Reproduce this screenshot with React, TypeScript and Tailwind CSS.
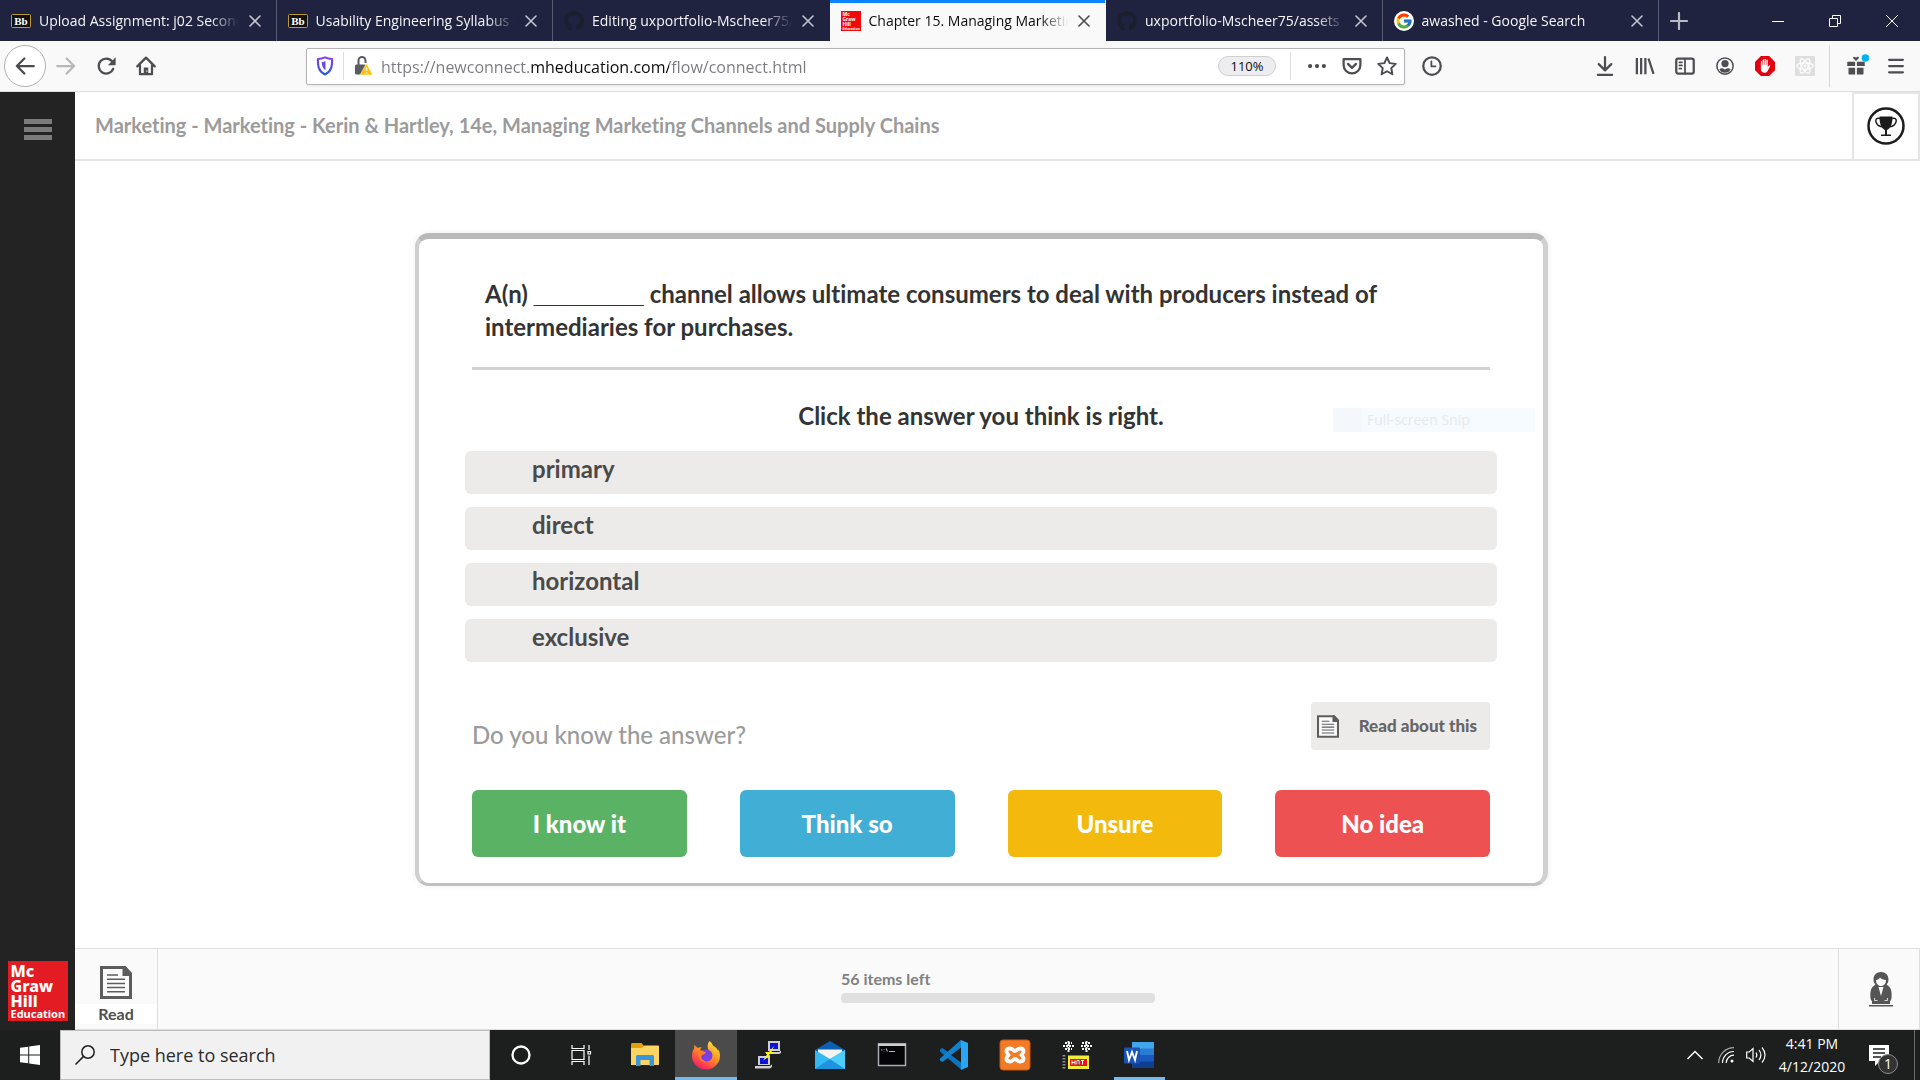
import type { ReactNode } from "react";
import { FaGithub } from "react-icons/fa";
import { FcGoogle } from "react-icons/fc";

function BlackboardIcon() {
  return (
    <svg viewBox="0 0 20 14" className="h-[14px] w-5 shrink-0">
      <rect x="0.5" y="0.5" width="19" height="13" rx="1" fill="#111" stroke="#b99a2e" />
      <text x="10" y="10.5" textAnchor="middle" fontFamily="Liberation Serif, serif" fontWeight="700" fontSize="11" fill="#fff">Bb</text>
    </svg>
  );
}

function McGrawFavicon() {
  return (
    <svg viewBox="0 0 20 20" className="size-5 shrink-0">
      <rect width="20" height="20" fill="#f20a0a" />
      <g fill="#fff" fontFamily="Noto Sans, sans-serif" fontWeight="700" fontSize="5">
        <text x="1.5" y="5">Mc</text>
        <text x="1.5" y="10">Graw</text>
        <text x="1.5" y="15">Hill</text>
        <text x="1.5" y="19" fontSize="3.5">Education</text>
      </g>
    </svg>
  );
}

function GoogleFavicon() {
  return (
    <span className="flex size-5 shrink-0 items-center justify-center rounded-full bg-white">
      <FcGoogle className="size-[18px]" />
    </span>
  );
}

function GithubFavicon() {
  return <FaGithub className="size-5 shrink-0 text-[#1b1e2c]" />;
}

type Tab = { title: string; icon: ReactNode; active?: boolean; divider?: boolean };

const tabs: Tab[] = [
  { title: "Upload Assignment: j02 Secondary", icon: <BlackboardIcon />, divider: true },
  { title: "Usability Engineering Syllabus - S", icon: <BlackboardIcon />, divider: true },
  { title: "Editing uxportfolio-Mscheer75/", icon: <GithubFavicon /> },
  { title: "Chapter 15. Managing Marketing", icon: <McGrawFavicon />, active: true },
  { title: "uxportfolio-Mscheer75/assets at", icon: <GithubFavicon />, divider: true },
  { title: "awashed - Google Search", icon: <GoogleFavicon />, divider: true },
];

function TabItem({ title, icon, active, divider }: Tab) {
  return (
    <div
      role="tab"
      aria-selected={!!active}
      className={`flex min-w-0 flex-1 items-center border-r pr-[9px] pl-[11px] ${
        active
          ? "bg-[#f9f9fa] text-[#0c0c0d] shadow-[inset_0_3px_0_#0a84ff]"
          : "text-[#f4f4f8]"
      } ${divider ? "border-r-[#5a5c73]" : "border-r-transparent"}`}
    >
      {icon}
      <span className="ml-2 flex-1 overflow-hidden pt-px text-sm whitespace-nowrap [mask-image:linear-gradient(to_right,black_85%,transparent_99%)]">
        {title}
      </span>
      <button aria-label={`Close ${title}`} className="ml-[2px] flex size-6 shrink-0 items-center justify-center">
        <svg viewBox="0 0 12 12" className={`size-3 ${active ? "text-[#4a4a4f]" : "text-[#c3c4cf]"}`}>
          <path d="M1 1l10 10M11 1L1 11" stroke="currentColor" strokeWidth="1.6" strokeLinecap="round" />
        </svg>
      </button>
    </div>
  );
}

function TabBar() {
  return (
    <div className="flex h-[41px] bg-[#202340]">
      <div role="tablist" className="flex w-[1659px] min-w-0">
        {tabs.map((t) => (
          <TabItem key={t.title} {...t} />
        ))}
      </div>
      <button aria-label="New tab" className="flex w-10 items-center justify-center text-[#b9bac6]">
        <svg viewBox="0 0 18 18" className="size-[18px]">
          <path d="M9 1v16M1 9h16" stroke="currentColor" strokeWidth="2.2" strokeLinecap="round" />
        </svg>
      </button>
      <div className="ml-auto flex text-white">
        <button aria-label="Minimize" className="flex w-[57px] items-center justify-center">
          <svg viewBox="0 0 12 12" className="size-3"><path d="M0 6.5h12" stroke="currentColor" /></svg>
        </button>
        <button aria-label="Restore" className="flex w-[57px] items-center justify-center">
          <svg viewBox="0 0 12 12" className="size-3" fill="none" stroke="currentColor">
            <path d="M0.500 3.500h8v8h-8zM3.500 3.500v-3h8v8h-3" />
          </svg>
        </button>
        <button aria-label="Close window" className="flex w-[57px] items-center justify-center">
          <svg viewBox="0 0 14 14" className="size-[14px]"><path d="M1 1l12 12M13 1L1 13" stroke="currentColor" /></svg>
        </button>
      </div>
    </div>
  );
}

function ToolButton({ label, width = "w-10", children }: { label: string; width?: string; children: ReactNode }) {
  return (
    <button aria-label={label} className={`${width} flex h-9 shrink-0 items-center justify-center text-[#4d4d52]`}>
      <svg viewBox="0 0 16 16" className="size-5 overflow-visible" fill="none" stroke="currentColor" strokeWidth="1.8" strokeLinecap="round" strokeLinejoin="round">
        {children}
      </svg>
    </button>
  );
}

function Toolbar() {
  return (
    <div className="flex h-[51px] items-center border-b border-[#dcdcdc] bg-[#f9f9fa] px-1">
      <button aria-label="Back" className="flex size-[42px] shrink-0 items-center justify-center rounded-full border border-[#b1b1b5] bg-white text-[#4a4a4f]">
        <svg viewBox="0 0 16 16" className="size-5" fill="none" stroke="currentColor" strokeWidth="1.8" strokeLinecap="round" strokeLinejoin="round">
          <path d="M15 8H1.500M7.500 2L1.500 8l6 6" />
        </svg>
      </button>
      <ToolButton label="Forward">
        <path stroke="#b8b8bb" d="M1 8h13.500M8.500 2l6 6-6 6" />
      </ToolButton>
      <ToolButton label="Reload">
        <path d="M13.800 10.200A6 6 0 1 1 12.900 4.300" />
        <path fill="currentColor" stroke="none" d="M15.700 1v5.700a.6.600 0 0 1-.6.600H9.500z" />
      </ToolButton>
      <ToolButton label="Home">
        <path d="M1 8.300L8 1.300l7 7M3.200 7.500v7h9.600v-7" />
        <path fill="currentColor" stroke="none" d="M6.200 9.200h3.600v5.300H6.200z" />
        <path stroke="none" fill="#fff" d="M8.200 11.500h.9v1h-.9z" />
      </ToolButton>

      <div className="ml-[140px] flex h-[37px] min-w-0 flex-1 items-center rounded-xs border border-[#b4b4b6] bg-white shadow-[0_1px_3px_rgba(0,0,0,0.08)]">
        <button aria-label="Tracking protection" className="flex w-9 shrink-0 justify-center">
          <svg viewBox="0 0 16 16" className="size-5">
            <defs>
              <linearGradient id="shield" x1="0" y1="0" x2="0" y2="1">
                <stop offset="0" stopColor="#8a3ff0" />
                <stop offset="1" stopColor="#2a5bd8" />
              </linearGradient>
            </defs>
            <path d="M8 1.100c-2 .9-3.900 1.200-5.700 1.300C2.300 8 2.600 12.200 8 14.800c5.400-2.600 5.700-6.800 5.700-12.400C11.900 2.300 10 2 8 1.100z" fill="none" stroke="url(#shield)" strokeWidth="1.700" strokeLinejoin="round" />
            <path d="M8.400 4.200v7.200C6 9.800 5.500 7.700 5.400 4.800c1-.1 2-.3 3-.6z" fill="#6b4be8" />
          </svg>
        </button>
        <span className="h-7 w-px bg-[#dededf]" />
        <button aria-label="Connection not secure" className="flex w-[37px] shrink-0 justify-center">
          <svg viewBox="0 0 18 18" className="size-[18px] overflow-visible">
            <path d="M4.500 8V3.500a3.500 3.500 0 0 1 7 0V6" fill="none" stroke="#5b5b60" strokeWidth="2" />
            <rect x="1" y="7.500" width="11" height="10" rx="1.500" fill="#5b5b60" />
            <path d="M12.500 6.300L18.800 18H6.200z" fill="#ffbf00" stroke="#fff" strokeWidth=".6" strokeLinejoin="round" />
            <path d="M12.500 10.500v3.300M12.500 15.300v1.200" stroke="#fff" strokeWidth="1.500" />
          </svg>
        </button>
        <input
          aria-label="Address"
          defaultValue="https://newconnect.mheducation.com/flow/connect.html"
          className="h-8 min-w-0 flex-1 bg-[linear-gradient(90deg,#7b7b7f_0_150px,#0c0c0d_150px_288px,#7b7b7f_288px)] bg-clip-text pt-[2px] text-base text-transparent outline-none"
        />
        <button className="h-5 w-[58px] shrink-0 rounded-full border border-[#cfcfd1] bg-[#ededf0] text-[13px] leading-[18px] text-[#0c0c0d]">110%</button>
        <span className="mr-2 ml-[14px] h-7 w-px bg-[#dededf]" />
        <ToolButton label="Page actions" width="w-[35px]">
          <path fill="currentColor" stroke="none" d="M2.500 6.300a1.700 1.700 0 1 0 0 3.400 1.700 1.700 0 0 0 0-3.400zM8 6.300a1.700 1.700 0 1 0 0 3.400 1.700 1.700 0 0 0 0-3.400zM13.500 6.300a1.700 1.700 0 1 0 0 3.400 1.700 1.700 0 0 0 0-3.400z" />
        </ToolButton>
        <ToolButton label="Save to Pocket" width="w-[35px]">
          <path d="M1.300 2.500h13.400v4.700a6.700 6.700 0 0 1-13.400 0zM4.800 6.300L8 9.500l3.200-3.200" />
        </ToolButton>
        <ToolButton label="Bookmark" width="w-[35px]">
          <path strokeWidth="1.600" d="M8 1.200l2.100 4.500 4.900.6-3.600 3.400.9 4.900L8 12.200l-4.300 2.400.9-4.900L1 6.300l4.900-.6z" />
        </ToolButton>
      </div>

      <div className="mr-[133px] ml-[7px] flex">
        <ToolButton label="History">
          <circle cx="8" cy="8" r="7" />
          <path strokeWidth="1.400" d="M7.500 4.300v4h3.300" />
        </ToolButton>
      </div>
      <ToolButton label="Downloads">
        <path d="M8 .8v10M3 6.500l5 5 5-5M2.300 15h11.400" />
      </ToolButton>
      <ToolButton label="Library">
        <path strokeLinecap="butt" d="M1.500 1.500v13M4.900 1.500v13M8.300 1.500v13M10.800 2l4 12.300" />
      </ToolButton>
      <ToolButton label="Sidebars">
        <rect x="1" y="2" width="14" height="12" rx="1.500" />
        <path strokeWidth="1.400" d="M8 2v12M3.500 5h2M3.500 7.500h2M3.500 10h1.500" />
      </ToolButton>
      <ToolButton label="Account">
        <circle cx="8" cy="8" r="6.500" strokeWidth="1.200" />
        <circle cx="8" cy="6" r="2.900" fill="currentColor" stroke="none" />
        <path fill="currentColor" stroke="none" d="M3.500 10.500c1.500-1 2.200-1.200 4.500.2 2.300-1.400 3-1.200 4.500-.2a5 5 0 0 1-9 0z" />
      </ToolButton>
      <ToolButton label="AdBlock">
        <path fill="#e3000f" stroke="none" d="M4.700 0h6.600L16 4.700v6.600L11.300 16H4.700L0 11.300V4.700z" />
        <path fill="#fff" stroke="none" d="M4.700 7V4.500c0-.7 1-.7 1 0V7h.4V3.200c0-.8 1.100-.8 1.100 0V7h.4V2.700c0-.8 1.100-.8 1.100 0V7h.4V3.300c0-.8 1.100-.8 1.100 0v5.400l.9-1c.6-.6 1.300-.1.900.6l-1.900 3.600c-.5.900-1.200 1.400-2.300 1.400-2 0-3.100-1.200-3.100-3z" />
      </ToolButton>
      <ToolButton label="React Developer Tools">
        <rect x="0" y="0" width="16" height="16" rx="1" fill="#dedede" stroke="none" />
        <g stroke="#fff" strokeWidth="1">
          <ellipse cx="8" cy="8" rx="6.500" ry="2.600" />
          <ellipse cx="8" cy="8" rx="6.500" ry="2.600" transform="rotate(60 8 8)" />
          <ellipse cx="8" cy="8" rx="6.500" ry="2.600" transform="rotate(120 8 8)" />
        </g>
        <circle cx="8" cy="8" r="1.200" fill="#fff" stroke="none" />
      </ToolButton>
      <span className="mr-[6px] ml-1 h-[42px] w-px bg-[#d7d7db]" />
      <ToolButton label="What's new" width="w-10">
        <path fill="currentColor" stroke="none" d="M1.500 4.500h5.800V8H1V5c0-.3.200-.5.500-.5zM8.700 4.500h5.800c.3 0 .5.200.5.500v3H8.700zM2 9.300h5.300v5.400H2.500a.5.500 0 0 1-.5-.5zM8.700 9.300H14v4.900c0 .3-.2.500-.5.500H8.700zM8 4L5.800 1.800C5.200.8 6.800 0 8 1.300 9.200 0 10.800.8 10.200 1.800z" />
        <circle cx="15.500" cy="1.500" r="3" fill="#00b3f4" stroke="none" />
      </ToolButton>
      <ToolButton label="Menu" width="w-10">
        <path d="M2.500 3h11M2.500 8h11M2.500 13h11" />
      </ToolButton>
    </div>
  );
}

function DocumentIcon({ className }: { className: string }) {
  return (
    <svg viewBox="0 0 32 33" className={className} fill="none" stroke="#5d5d5d">
      <path strokeWidth="3" fill="#fbfbfb" d="M1.500 1.500h23l6 6v24h-29z" />
      <path fill="#5d5d5d" stroke="none" d="M22.500 0h3L32 7.500V10h-9.500z" />
      <path strokeWidth="1.500" d="M7 9h11M7 13.200h18M7 17.400h18M7 21.600h18M7 25.800h18" />
    </svg>
  );
}

function Sidebar() {
  return (
    <nav className="flex w-[75px] shrink-0 flex-col items-center justify-between bg-[#232323] pt-[27px] pb-[9px]">
      <button aria-label="Open menu" className="flex w-7 flex-col gap-[3px]">
        <span className="h-[5px] bg-[#7b7b7b]" />
        <span className="h-[5px] bg-[#7b7b7b]" />
        <span className="h-[5px] bg-[#7b7b7b]" />
      </button>
      <div className="size-[60px] bg-[#e31b23] pt-[3px] pl-[3px] font-['Noto_Sans',sans-serif] text-base leading-[15px] font-extrabold text-white">
        <div>Mc</div>
        <div>Graw</div>
        <div>Hill</div>
        <div className="text-[11px] leading-[10px] font-bold">Education</div>
      </div>
    </nav>
  );
}

const answers = ["primary", "direct", "horizontal", "exclusive"];

const confidence = [
  { label: "I know it", color: "bg-[#5ab365]" },
  { label: "Think so", color: "bg-[#41aed5]" },
  { label: "Unsure", color: "bg-[#f3b90c]" },
  { label: "No idea", color: "bg-[#ee5152]" },
];

function QuestionCard() {
  return (
    <section className="rounded-[14px] border-t-6 border-r-5 border-b-3 border-l-4 border-t-[#b9b9b9] border-r-[#d0d0d0] border-b-[#c0c0c0] border-l-[#cfcfcf] bg-white px-[46px] pt-[38px] pb-[26px] text-2xl font-bold text-[#333] shadow-[0_0_6px_rgba(0,0,0,0.08)]">
      <p className="px-5 leading-[33px]">
        A(n) <span className="font-['Liberation_Sans',sans-serif] text-[22px] leading-none">_________</span> channel allows ultimate consumers to deal with producers instead of intermediaries for purchases.
      </p>
      <hr className="mx-[7px] mt-6 border-t-3 border-[#d2d2d2]" />
      <div className="relative mt-[29px]">
        <h2 className="text-center leading-[33px]">Click the answer you think is right.</h2>
        <div className="absolute top-[9px] right-[-38px] flex h-6 w-[202px] items-center bg-[#f5fbfe] pl-[34px] font-['Open_Sans',sans-serif] text-sm font-normal text-[#e6e9ea] shadow-[inset_29px_0_0_#f4f8fd]">
          Full-screen Snip
        </div>
      </div>
      <div className="mt-[19px] flex flex-col gap-[13px]">
        {answers.map((a) => (
          <button key={a} className="flex h-[43px] items-start rounded-md bg-[#ecebe9] px-[67px] leading-9 text-[#4a4a4a]">
            {a}
          </button>
        ))}
      </div>
      <div className="mt-10 flex items-end justify-between px-[7px]">
        <p className="leading-[30px] font-medium text-[#9b9b9b]">Do you know the answer?</p>
        <button className="flex h-12 w-[179px] items-center justify-between rounded-sm bg-[#ecebe9] pr-[13px] pl-[6px] text-[17px] font-black text-[#666]">
          <DocumentIcon className="h-[23px] w-[22px]" />
          Read about this
        </button>
      </div>
      <div className="mt-10 grid grid-cols-4 gap-[53px] px-[7px]">
        {confidence.map((c) => (
          <button key={c.label} className={`${c.color} h-[67px] rounded-md font-black text-white`}>
            {c.label}
          </button>
        ))}
      </div>
    </section>
  );
}

function CoursePage() {
  return (
    <div className="flex flex-1 bg-white font-[Lato,sans-serif] [font-variant-ligatures:none]">
      <Sidebar />
      <div className="flex min-w-0 flex-1 flex-col">
        <header className="flex h-[69px] items-stretch border-b-2 border-[#e3e3e3]">
          <h1 className="flex flex-1 items-center pb-[2px] pl-5 text-xl font-bold text-[#9b9b9b]">
            Marketing - Marketing - Kerin &amp; Hartley, 14e, Managing Marketing Channels and Supply Chains
          </h1>
          <button aria-label="Achievements" className="flex w-[68px] items-center justify-center border-x-2 border-t-2 border-[#e6e6e6] pb-[2px]">
            <svg viewBox="0 0 38 38" className="size-[38px]" fill="none" stroke="#1c1c1c">
              <circle cx="19" cy="19" r="17.500" strokeWidth="2.500" />
              <path fill="#1c1c1c" stroke="none" d="M12.500 9.500h13c0 7-1.500 11.500-5.500 13.500v4.500h4V29H14v-1.500h4V23c-4-2-5.500-6.500-5.500-13.500z" />
              <path strokeWidth="1.500" d="M13 11.500c-3-1-5 .5-4 3.500s3.500 4.500 6 4.700M25 11.500c3-1 5 .5 4 3.500s-3.500 4.500-6 4.700" />
            </svg>
          </button>
        </header>
        <main className="flex-1 pt-[72px] pr-[372px] pb-[59px] pl-[340px]">
          <QuestionCard />
        </main>
        <footer className="flex h-[82px] items-stretch border-y border-[#dfdfdf] bg-[#fafafa]">
          <button className="flex w-[83px] flex-col items-center border-r border-[#dfdfdf] pt-[17px] text-base font-bold text-[#4f4f4f]">
            <DocumentIcon className="h-[33px] w-8" />
            <span className="mt-[5px] w-full bg-white leading-5">Read</span>
          </button>
          <div className="flex flex-1 justify-center pt-[19px]">
            <div className="w-[314px]">
              <label htmlFor="items-left" className="block text-base leading-[22px] font-bold text-[#808080]">56 items left</label>
              <div id="items-left" role="progressbar" aria-valuenow={0} className="mt-[3px] h-[10px] rounded-[4px] bg-[#e0e0e0]" />
            </div>
          </div>
          <button aria-label="Profile" className="flex w-[82px] items-center justify-center border-x border-[#dfdfdf] pl-[3px]">
            <svg viewBox="0 0 24 35" className="h-[35px] w-6">
              <path fill="#555" d="M12 0C7.500 0 4.500 3 4.500 7.500c0 2 .6 3.500 1.800 5L3.500 15C1.500 17 1 22 1.500 26c.3 2 1 3 1.500 3v3h18v-3c.6 0 1.200-1 1.500-3 .5-4 0-9-2-11l-2.800-2.500c1.200-1.500 1.800-3 1.800-5C19.500 3 16.500 0 12 0z" />
              <path fill="#fafafa" d="M7 8c2 0 3-1 4-2.500 1 1.300 3.500 2.500 6 2.500 0 3.500-2 6-5 6s-5-2.500-5-6zM9.500 15h5L12 24z" />
              <path stroke="#fafafa" strokeWidth=".8" fill="none" d="M5.500 26v2.500h3M18.500 26v2.500h-3" />
              <path fill="#555" d="M0 33h24v1.500H0z" />
            </svg>
          </button>
        </footer>
      </div>
    </div>
  );
}

type App = { name: string; icon: ReactNode; state?: "active" | "open" };

const apps: App[] = [
  {
    name: "Cortana",
    icon: <circle cx="15" cy="15" r="8.500" fill="none" stroke="#fff" strokeWidth="2.300" />,
  },
  {
    name: "Task View",
    icon: (
      <path d="M4 5v3.500h12V5M4 10.500h12v9H4zM4 25v-3.500h12V25M21 5v5M21 15.500V25M20 11.500h2.500v2.500H20z" fill="none" stroke="#fff" strokeWidth="1.200" />
    ),
  },
  {
    name: "File Explorer",
    icon: (
      <>
        <path d="M1 4.500C1 3.600 1.600 3 2.500 3h9l3 3.500V10H1z" fill="#e0a10d" />
        <path d="M1 8h11l2.500-2.500H28c.6 0 1 .4 1 1V24c0 .6-.4 1-1 1H1z" fill="#fcd462" />
        <path d="M6 26V16.500c0-.9.600-1.500 1.500-1.500h15c.9 0 1.500.600 1.500 1.500V26h-4.500v-6h-9v6z" fill="#3b95da" />
      </>
    ),
  },
  {
    name: "Firefox",
    state: "active",
    icon: (
      <>
        <defs>
          <linearGradient id="fox" x1="0.800" y1="0" x2="0.200" y2="1">
            <stop offset="0" stopColor="#ffe93b" />
            <stop offset="0.450" stopColor="#ff9122" />
            <stop offset="0.800" stopColor="#ff3a4f" />
            <stop offset="1" stopColor="#e8167c" />
          </linearGradient>
        </defs>
        <path d="M18.500 1c2 1.500 3 3.200 3.500 4.800 2.500 1 4.500 3.500 5 5.200l.5-1.500c1 2 1.500 4.500 1.500 6.500A14 13.500 0 0 1 1 16c0-3 .8-5.500 2-7.200L3.500 5l3.200 3c1-.5 2.300-.8 3.800-.6-1 1-1.500 1.800-1 3L18 11c-2-3.500-2-7 .5-10z" fill="url(#fox)" />
        <circle cx="15.500" cy="15.500" r="6" fill="#7a3fe0" />
        <path d="M7 11.500c3-1 5.500 0 8 .5-.5 2-2.500 2.500-4.500 3.500C10 18.500 12 21 15.500 21.500c-5 1.500-9-3-8.500-10z" fill="#ff7a2a" />
      </>
    ),
  },
  {
    name: "PuTTY",
    icon: (
      <>
        <path d="M15 1h12v10H15zM13 12h13l2-1.500v2.500l-2 1H13z" fill="#cfcfcf" />
        <path d="M17 3h8v6h-8z" fill="#0a12d8" />
        <path d="M5 16h12v9H5zM2 26h15l2-1.500V27l-2 1.500H2z" fill="#cfcfcf" />
        <path d="M7 18h8v6H7z" fill="#0a12d8" />
        <path d="M21 6l-5 6h-4l2 2.500-4 6 7-4.500-1-2 6-2h-3.500z" fill="#fff21a" />
      </>
    ),
  },
  {
    name: "Mail",
    icon: (
      <>
        <path d="M0 10L15 1l15 9v4H0z" fill="#0a5fb4" />
        <path d="M3 9.500h24v12H3z" fill="#f3f3f3" />
        <path d="M0 10l15 9L30 10v19H0z" fill="#35b7f0" />
        <path d="M0 29l15-10 15 10z" fill="#1e93df" />
        <path d="M15 19L30 10v19z" fill="#4dcdfa" />
      </>
    ),
  },
  {
    name: "Command Prompt",
    icon: (
      <>
        <path d="M1.500 4h27v21.500h-27z" fill="#050505" stroke="#a8acb3" strokeWidth="1.500" />
        <path d="M1 3.500h28v2.500H1z" fill="#c9cdd2" />
        <path d="M4 10h1.500M7 9v.5M7 11v.5M9 8.500l1.500 3M12 11.500h6" stroke="#b8b8b8" strokeWidth="1.100" />
      </>
    ),
  },
  {
    name: "Visual Studio Code",
    icon: (
      <>
        <path d="M22 0L9 12 3.500 8 1 9.500v2L22 29.500z" fill="#0b74c0" />
        <path d="M22 8L3.500 22 1 20.500v-2L22 0z" fill="#1580cc" />
        <path d="M12 15l10-7.500v15z" fill="#1d1f1f" />
        <path d="M22 0l7 3v24l-7 3z" fill="#2aa7f2" />
      </>
    ),
  },
  {
    name: "XAMPP",
    icon: (
      <>
        <rect x="0" y="0" width="30" height="30" rx="3" fill="#f47b26" stroke="#c85a10" />
        <path d="M10 8.500c-2.500 0-3.500 1.500-3.500 3s1.200 2.200 2 3.500c-.8 1.300-2 2-2 3.500s1 3 3.500 3c3 0 3-2.500 5-2.500s2 2.500 5 2.500c2.500 0 3.500-1.500 3.500-3s-1.200-2.200-2-3.500c.8-1.300 2-2 2-3.500s-1-3-3.500-3c-3 0-3 2.500-5 2.500s-2-2.500-5-2.500z" fill="none" stroke="#fff" strokeWidth="3.800" />
      </>
    ),
  },
  {
    name: "WATS",
    icon: (
      <>
        <path d="M1 6h11M3 3h7M3 9h7M6.500 1v11M19 6h11M20 9h8M20 3h8M24.500 1v11" stroke="#f4f4f4" strokeWidth="2" strokeDasharray="2 1" />
        <path d="M2 15v14" stroke="#8a8a8a" strokeWidth="3" strokeDasharray="1.500 1.500" />
        <path d="M6 15.500h21V29H6z" fill="#f2ee35" />
        <path d="M8 19h17v7H8z" fill="#e81414" />
        <path d="M10 20.500v4M13 20.500v4M10 22.500h3M15 24.500v-4h2v4M19 20.500h3M20.500 20.500v4" stroke="#fff" />
      </>
    ),
  },
  {
    name: "Word",
    state: "open",
    icon: (
      <>
        <path d="M8 2h22v7H8z" fill="#41a5ee" />
        <path d="M8 8.500h22v7H8z" fill="#2b7cd3" />
        <path d="M8 15h22v7H8z" fill="#185abd" />
        <path d="M8 21.500h22V28H8z" fill="#103f91" />
        <rect x="0" y="7.500" width="16" height="16" rx="1" fill="#1a53b4" />
        <path d="M3 11l2 9 3-8 3 8 2-9" fill="none" stroke="#fff" strokeWidth="1.900" />
      </>
    ),
  },
];

function Taskbar() {
  return (
    <div className="flex h-[50px] bg-[#1d1f1f] text-white">
      <button aria-label="Start" className="flex w-[60px] shrink-0 items-center justify-center">
        <svg viewBox="0 0 20 20" className="size-5" fill="#fff">
          <path d="M0 2.800L8.200 1.700v7.800H0zM9.200 1.500L20 0v9.500H9.200zM0 10.500h8.200v7.800L0 17.200zM9.200 10.500H20V20L9.200 18.500z" />
        </svg>
      </button>
      <label className="flex w-[430px] shrink-0 items-center border border-[#bdbdbd] bg-[#f1f1f1] pl-[14px] text-[#1f1f1f]">
        <svg viewBox="0 0 20 20" className="size-5" fill="none" stroke="currentColor" strokeWidth="1.500">
          <circle cx="13" cy="7" r="6.200" />
          <path d="M8.600 11.400L.500 19.500" />
        </svg>
        <input
          aria-label="Search"
          placeholder="Type here to search"
          className="ml-[15px] min-w-0 flex-1 bg-transparent text-lg outline-none placeholder:text-[#2b2b2b]"
        />
      </label>
      <div className="flex w-[680px] shrink-0">
        {apps.map((a) => (
          <button
            key={a.name}
            aria-label={a.name}
            className={`flex flex-1 flex-col items-center pt-[10px] ${a.state === "active" ? "bg-[#4b4b4b]" : ""}`}
          >
            <svg viewBox="0 0 30 30" className="size-[30px] shrink-0 overflow-visible">{a.icon}</svg>
            {a.state && <span className={`mt-auto h-[3px] bg-[#76b9ed] ${a.state === "active" ? "w-full" : "w-[51px]"}`} />}
          </button>
        ))}
      </div>
      <div className="ml-auto flex items-center">
        <button aria-label="Show hidden icons" className="flex w-[30px] justify-center">
          <svg viewBox="0 0 16 10" className="h-[10px] w-4" fill="none" stroke="#fff" strokeWidth="1.500"><path d="M.500 9L8 1.500 15.500 9" /></svg>
        </button>
        <button aria-label="Network" className="flex w-[31px] justify-center">
          <svg viewBox="0 0 16 16" className="size-4" fill="none" stroke="#fff" strokeWidth="1.200">
            <path stroke="#aaa" d="M.700 16C.700 7.500 7.500.700 16 .700" />
            <path d="M4.500 16C4.500 9.500 9.500 4.500 16 4.500M8.200 16c0-4.300 3.500-7.800 7.800-7.800" />
            <circle cx="14" cy="14" r="1.500" fill="#fff" stroke="none" />
          </svg>
        </button>
        <button aria-label="Volume" className="flex w-[29px] justify-center">
          <svg viewBox="0 0 20 18" className="h-[18px] w-5" fill="none" stroke="#fff" strokeWidth="1.200">
            <path d="M.700 6h2.500L7 2.500v13L3.200 12H.700zM10 6.500c1 1.500 1 3.500 0 5M13 4c2.300 3 2.300 7 0 10M16 1.500c4 4.500 4 10.500 0 15" />
          </svg>
        </button>
        <div className="ml-1 w-[76px] text-center text-sm leading-[23px]">
          <div>4:41 PM</div>
          <div>4/12/2020</div>
        </div>
        <button aria-label="Notifications" className="relative mr-6 ml-[18px] size-[22px]">
          <svg viewBox="0 0 22 22" className="size-[22px]">
            <path d="M1 1h20v16h-9l-5 5v-5H1z" fill="#fff" />
            <path d="M5 5h12M5 9h12M5 13h8" stroke="#1d1f1f" strokeWidth="1.300" />
          </svg>
          <span className="absolute top-[10px] left-[10px] flex size-5 items-center justify-center rounded-full border border-[#8a8a8a] bg-[#333] text-sm leading-none">1</span>
        </button>
        <button aria-label="Show desktop" className="h-[50px] w-[6px] border-l border-[#6a6a6a]" />
      </div>
    </div>
  );
}

export default function App() {
  return (
    <div className="flex min-h-screen flex-col font-['Open_Sans',sans-serif]">
      <TabBar />
      <Toolbar />
      <CoursePage />
      <Taskbar />
    </div>
  );
}
